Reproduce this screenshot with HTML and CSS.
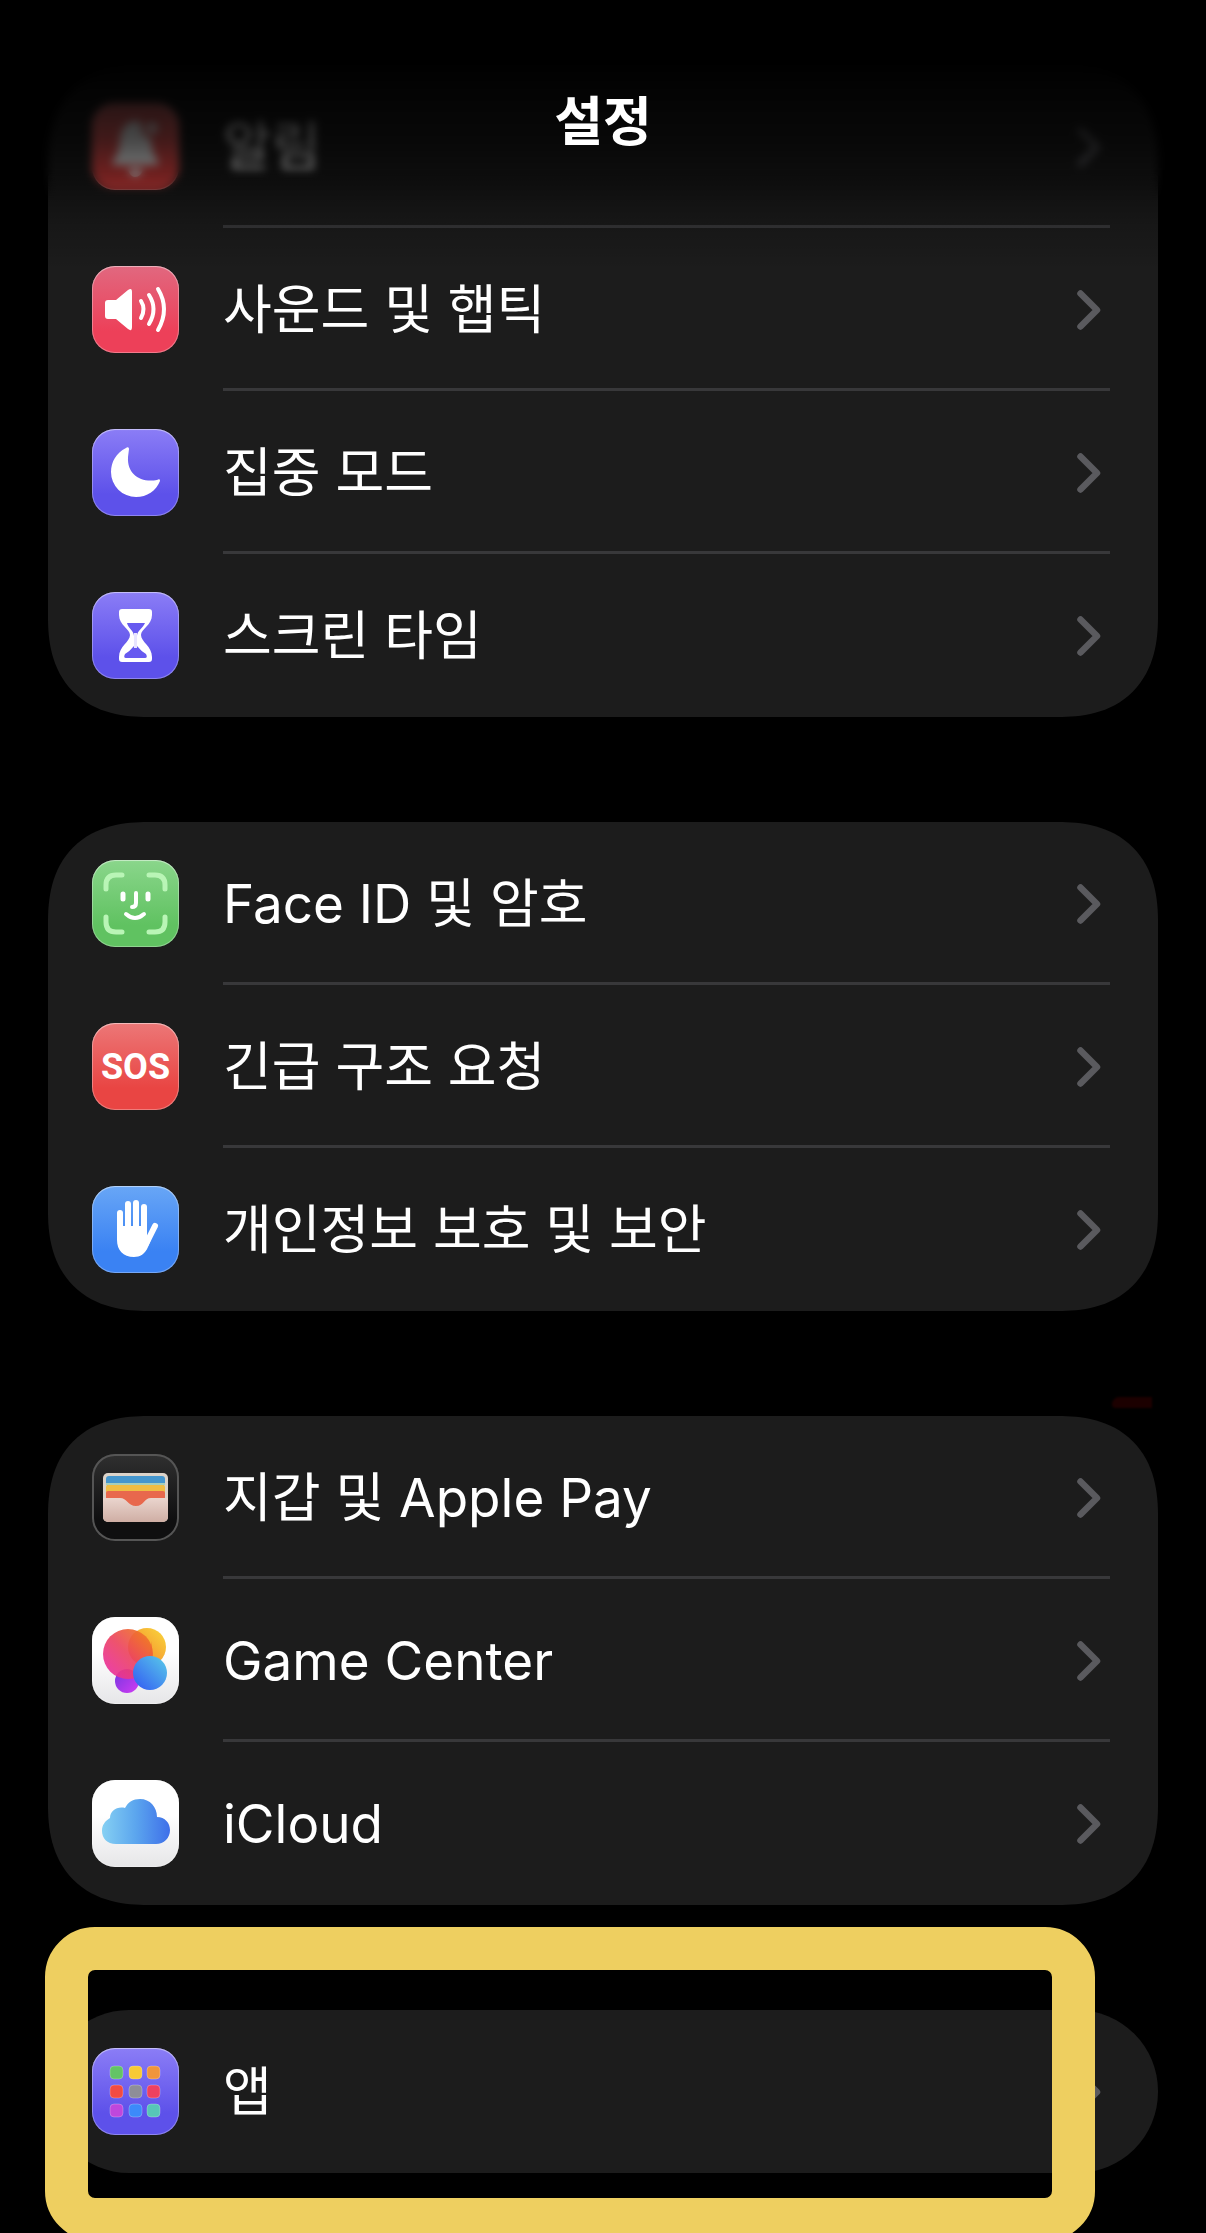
FILE: index.html
```html
<!DOCTYPE html>
<html lang="ko">
<head>
    <meta charset="utf-8">
    <meta name="viewport" content="width=device-width, initial-scale=1">
    <title>설정</title>
    <link rel="stylesheet" href="styles.css">
</head>
<body>
    <!-- shared chevron -->
    <svg class="defs" width="0" height="0" aria-hidden="true">
        <symbol id="chevron" viewBox="0 0 24 40">
            <path d="M3.5 3.5 L20 20 L3.5 36.5" fill="none" stroke="#5a5a5e" stroke-width="6.5" stroke-linecap="round" stroke-linejoin="round"/>
        </symbol>
    </svg>

    <header class="header">
        <h1>설정</h1>
    </header>

    <main class="settings">
        <ul class="group">
            <li>
                <a class="row" href="#notifications">
                    <span class="icon red">
                        <svg viewBox="0 0 87 87">
                            <path d="M43 18 C33 18 29 27 28 37 C27 48 25 53 21 58 Q19 62 23 62 H64 Q68 62 66 58 C62 53 60 48 59 37 C58 27 53 18 43 18Z" fill="#fff"/>
                            <path d="M36 66 H51 Q49 74 43 74 Q38 74 36 66Z" fill="#fff"/>
                            <circle cx="60" cy="25" r="9" fill="#f6cccc" stroke="#d8423f" stroke-width="3"/>
                        </svg>
                    </span>
                    <span class="body"><span class="label">알림</span><svg class="chevron"><use href="#chevron"/></svg></span>
                </a>
            </li>
            <li>
                <a class="row" href="#sounds">
                    <span class="icon pink">
                        <svg viewBox="0 0 87 87">
                            <path d="M16 34 H24 L36 24 Q40 21 40 26 V61 Q40 66 36 63 L24 53 H16 Q13 53 13 50 V37 Q13 34 16 34Z" fill="#fff"/>
                            <g fill="none" stroke="#fff" stroke-width="4" stroke-linecap="round">
                                <path d="M49 35 Q54 43 49 52"/>
                                <path d="M57 29 Q66 43 57 58"/>
                                <path d="M66 23 Q78 43 66 64"/>
                            </g>
                        </svg>
                    </span>
                    <span class="body"><span class="label">사운드 및 햅틱</span><svg class="chevron"><use href="#chevron"/></svg></span>
                </a>
            </li>
            <li>
                <a class="row" href="#focus">
                    <span class="icon purple">
                        <svg viewBox="0 0 87 87">
                            <path d="M37 20 C37 18 35 18 34 19 C24 24 19 33 19 43 A25 25 0 0 0 44 68 C55 68 64 62 68 52 C68 50 67 50 65 51 C48 54 35 45 36 28 Z" fill="#fff"/>
                        </svg>
                    </span>
                    <span class="body"><span class="label">집중 모드</span><svg class="chevron"><use href="#chevron"/></svg></span>
                </a>
            </li>
            <li>
                <a class="row" href="#screen-time">
                    <span class="icon purple">
                        <svg viewBox="0 0 87 87">
                            <path d="M30 17 H57 Q60 17 60 20 V23 C60 33 49 37 49 43 C49 50 60 54 60 65 V67 Q60 70 57 70 H30 Q27 70 27 67 V65 C27 54 38 50 38 43 C38 37 27 33 27 23 V20 Q27 17 30 17Z" fill="#fff"/>
                            <path d="M35 31 H53 C51 36 45 39 45 44 V54 Q49 59 54 62 Q56 66 53 66 H34 Q31 66 33 62 Q38 59 42 54 V44 C42 39 36 36 35 31Z" fill="#675af0"/>
                            <path d="M42 41 H45 V56 H42Z" fill="#e8e5ff"/>
                        </svg>
                    </span>
                    <span class="body"><span class="label">스크린 타임</span><svg class="chevron"><use href="#chevron"/></svg></span>
                </a>
            </li>
        </ul>

        <ul class="group">
            <li>
                <a class="row" href="#face-id">
                    <span class="icon green">
                        <svg viewBox="0 0 87 87" fill="none" stroke-linecap="round">
                            <g stroke="#b9f5b6" stroke-width="5">
                                <path d="M14 29 V25 Q14 15 24 15 H30"/>
                                <path d="M57 15 H63 Q73 15 73 25 V29"/>
                                <path d="M14 57 V62 Q14 72 24 72 H30"/>
                                <path d="M57 72 H63 Q73 72 73 62 V57"/>
                            </g>
                            <g stroke="#fff">
                                <path d="M31 34 V39 M56 34 V39" stroke-width="5"/>
                                <path d="M44 33 V43 Q44 47 40 47" stroke-width="4"/>
                                <path d="M34 54 Q43 62 52 54" stroke-width="4"/>
                            </g>
                        </svg>
                    </span>
                    <span class="body"><span class="label">Face ID 및 암호</span><svg class="chevron"><use href="#chevron"/></svg></span>
                </a>
            </li>
            <li>
                <a class="row" href="#sos">
                    <span class="icon red sos">SOS</span>
                    <span class="body"><span class="label">긴급 구조 요청</span><svg class="chevron"><use href="#chevron"/></svg></span>
                </a>
            </li>
            <li>
                <a class="row" href="#privacy">
                    <span class="icon blue">
                        <svg viewBox="0 0 87 87">
                            <g stroke="#fff" stroke-linecap="round" stroke-width="6" fill="none">
                                <path d="M28 27 V50"/>
                                <path d="M36 18 V45"/>
                                <path d="M44 17 V45"/>
                                <path d="M52 21 V45"/>
                                <path d="M63 40 L54 58"/>
                            </g>
                            <path d="M25 40 H55 V51 L60 51 L56 61 C53 68 48 71 42 71 C31 71 25 64 25 54Z" fill="#fff"/>
                        </svg>
                    </span>
                    <span class="body"><span class="label">개인정보 보호 및 보안</span><svg class="chevron"><use href="#chevron"/></svg></span>
                </a>
            </li>
        </ul>

        <ul class="group smudged">
            <li>
                <a class="row" href="#wallet">
                    <span class="icon black">
                        <svg viewBox="0 0 87 87">
                            <defs>
                                <clipPath id="wallet-clip"><rect x="11" y="19" width="65" height="49" rx="5"/></clipPath>
                                <linearGradient id="pouch" x1="0" y1="0" x2="0" y2="1">
                                    <stop offset="0" stop-color="#ead5ce"/>
                                    <stop offset="1" stop-color="#cfaea4"/>
                                </linearGradient>
                            </defs>
                            <g clip-path="url(#wallet-clip)">
                                <rect x="11" y="19" width="65" height="49" fill="#dcd3c9"/>
                                <rect x="14" y="22" width="59" height="10" rx="3" fill="#4596cd"/>
                                <rect x="14" y="29" width="59" height="2" fill="#a5cfbc"/>
                                <rect x="14" y="31" width="59" height="10" rx="2" fill="#efbd43"/>
                                <rect x="14" y="37" width="59" height="20" rx="2" fill="#e8684d"/>
                                <path d="M11 44 H28 C35 44 36 52 44 52 C52 52 52 44 59 44 H76 V68 H11Z" fill="url(#pouch)"/>
                            </g>
                        </svg>
                    </span>
                    <span class="body"><span class="label">지갑 및 Apple Pay</span><svg class="chevron"><use href="#chevron"/></svg></span>
                </a>
            </li>
            <li>
                <a class="row" href="#game-center">
                    <span class="icon white">
                        <svg viewBox="0 0 87 87">
                            <defs>
                                <linearGradient id="gc-pink" x1="0" y1="1" x2="1" y2="0">
                                    <stop offset="0" stop-color="#ea2bb0"/>
                                    <stop offset=".5" stop-color="#ec4460"/>
                                    <stop offset=".8" stop-color="#ef6a30"/>
                                    <stop offset="1" stop-color="#f28a25"/>
                                </linearGradient>
                                <linearGradient id="gc-yellow" x1="0" y1="1" x2="1" y2="0">
                                    <stop offset="0" stop-color="#f3742a"/>
                                    <stop offset="1" stop-color="#f9d93c"/>
                                </linearGradient>
                                <linearGradient id="gc-blue" x1="0" y1="1" x2="1" y2="0">
                                    <stop offset="0" stop-color="#3157f3"/>
                                    <stop offset="1" stop-color="#59cce9"/>
                                </linearGradient>
                                <linearGradient id="gc-purple" x1="0" y1="0" x2="1" y2="1">
                                    <stop offset="0" stop-color="#7436df"/>
                                    <stop offset="1" stop-color="#d23cf3"/>
                                </linearGradient>
                            </defs>
                            <circle cx="35" cy="64" r="12" fill="url(#gc-purple)"/>
                            <circle cx="55" cy="30" r="19" fill="url(#gc-yellow)"/>
                            <circle cx="36" cy="37" r="25" fill="url(#gc-pink)" opacity=".92"/>
                            <path d="M52 46 L60 38 V24 L54 56Z" fill="#f0632f" opacity=".5"/>
                            <circle cx="58" cy="56" r="17" fill="url(#gc-blue)"/>
                        </svg>
                    </span>
                    <span class="body"><span class="label">Game Center</span><svg class="chevron"><use href="#chevron"/></svg></span>
                </a>
            </li>
            <li>
                <a class="row" href="#icloud">
                    <span class="icon white">
                        <svg viewBox="0 0 87 87">
                            <defs>
                                <linearGradient id="cloud" x1="0" y1="0" x2="1" y2="0">
                                    <stop offset="0" stop-color="#85d0f3"/>
                                    <stop offset=".5" stop-color="#5ba5ee"/>
                                    <stop offset="1" stop-color="#3e6fe9"/>
                                </linearGradient>
                            </defs>
                            <path d="M24 64 C15 64 10 58 10 51 C10 45 13 41 18 38 C18 31 25 26 33 28 C36 22 41 19 48 19 C58 19 65 27 65 37 C73 37 78 43 78 50 C78 58 72 64 64 64Z" fill="url(#cloud)"/>
                        </svg>
                    </span>
                    <span class="body"><span class="label">iCloud</span><svg class="chevron"><use href="#chevron"/></svg></span>
                </a>
            </li>
        </ul>

        <ul class="group highlighted">
            <li>
                <a class="row" href="#apps">
                    <span class="icon purple">
                        <svg viewBox="0 0 87 87" stroke="#fff" stroke-opacity=".25">
                            <rect x="18" y="18" width="13" height="13" rx="4" fill="#63c466"/>
                            <rect x="37" y="18" width="13" height="13" rx="4" fill="#f8ca35"/>
                            <rect x="55" y="18" width="13" height="13" rx="4" fill="#f0953c"/>
                            <rect x="18" y="37" width="13" height="13" rx="4" fill="#f24b42"/>
                            <rect x="37" y="37" width="13" height="13" rx="4" fill="#8e8e98"/>
                            <rect x="55" y="37" width="13" height="13" rx="4" fill="#ee4160"/>
                            <rect x="18" y="56" width="13" height="13" rx="4" fill="#bf47dc"/>
                            <rect x="37" y="56" width="13" height="13" rx="4" fill="#3c8afa"/>
                            <rect x="55" y="56" width="13" height="13" rx="4" fill="#57c6b7"/>
                        </svg>
                    </span>
                    <span class="body"><span class="label">앱</span><svg class="chevron"><use href="#chevron"/></svg></span>
                </a>
            </li>
        </ul>
    </main>
</body>
</html>
```

FILE: styles.css
```css
* {
    box-sizing: border-box;
}

body {
    margin: 0;
    background: #000;
    color: #fff;
    font-family: Inter, "Noto Sans CJK KR", sans-serif;
    font-size: 53px;
}

.defs {
    position: absolute;
}

/* title bar floats over the list and fades it out */
.header {
    position: absolute;
    top: 0;
    left: 0;
    right: 0;
    z-index: 2;
    height: 270px;
    padding-top: 82px;
    text-align: center;
    background: linear-gradient(rgba(0, 0, 0, 1) 60px, rgba(0, 0, 0, 0.87) 90px, rgba(0, 0, 0, 0.72) 140px, rgba(0, 0, 0, 0.52) 175px, rgba(0, 0, 0, 0.35) 200px, rgba(0, 0, 0, 0.18) 227px, rgba(0, 0, 0, 0) 270px);
    pointer-events: none;
}

.header::before {
    content: "";
    position: absolute;
    inset: 0 0 70px;
    z-index: -1;
    backdrop-filter: blur(4px);
    mask-image: linear-gradient(#000 170px, transparent 200px);
}

.header h1 {
    margin: 0;
    font-size: 53px;
    font-weight: 700;
    line-height: 80px;
}

.settings {
    display: flex;
    flex-direction: column;
    gap: 105px;
    min-height: 100vh;
    padding: 65px 48px 60px;
    overflow: hidden;
}

.group {
    position: relative;
    margin: 0;
    padding: 0;
    list-style: none;
    background: #1c1c1c;
    border-radius: 81px;
}

/* smoother corners where the browser has them */
@supports (corner-shape: superellipse(1.25)) {
    .group:not(.highlighted) {
        border-radius: 100px;
        corner-shape: superellipse(1.25);
    }
}

.row {
    display: flex;
    align-items: center;
    gap: 44px;
    padding: 0 48px 0 44px;
    color: inherit;
    text-decoration: none;
}

.body {
    display: flex;
    flex: 1;
    align-items: center;
    justify-content: space-between;
    height: 163px;
    padding-right: 9px;
}

li:not(:last-child) .body {
    box-shadow: inset 0 -3px #38383a;
}

.label {
    line-height: 80px;
}

.chevron {
    width: 24px;
    height: 40px;
}

.icon {
    flex: none;
    display: flex;
    align-items: center;
    justify-content: center;
    width: 87px;
    height: 87px;
    border-radius: 23px;
    overflow: hidden;
    box-shadow: inset 0 0 0 1px rgba(255, 255, 255, 0.3), inset 0 1px 1px rgba(255, 255, 255, 0.3);
}

.icon svg {
    width: 87px;
    height: 87px;
}

.red {
    background: linear-gradient(#ec7777, #e94543 75%);
}

.pink {
    background: linear-gradient(#e1687f, #ed4059 75%);
}

.purple {
    background: linear-gradient(#8b7df6, #5d51ea 75%);
}

.green {
    background: linear-gradient(#8ad68b, #60c261 75%);
}

.blue {
    background: linear-gradient(#68a6f6, #3a82f3 75%);
}

.black {
    background: linear-gradient(#303030, #0f0f10 75%);
    box-shadow: inset 0 0 0 2px #555;
}

.white {
    background: linear-gradient(#fff 40%, #e6e6e8);
}

.sos {
    font-family: Roboto, sans-serif;
    font-size: 36px;
    font-weight: 700;
}

/* faint red mark above the wallet card */
.smudged::before {
    content: "";
    position: absolute;
    top: -19px;
    right: 6px;
    width: 40px;
    height: 11px;
    background: #1c0000;
    border-radius: 12px 0 0 6px;
    filter: blur(1px);
}

.highlighted::after {
    content: "";
    position: absolute;
    inset: -83px 63px -68px -3px;
    border: 43px solid #eecf60;
    border-radius: 50px;
    pointer-events: none;
}
```
